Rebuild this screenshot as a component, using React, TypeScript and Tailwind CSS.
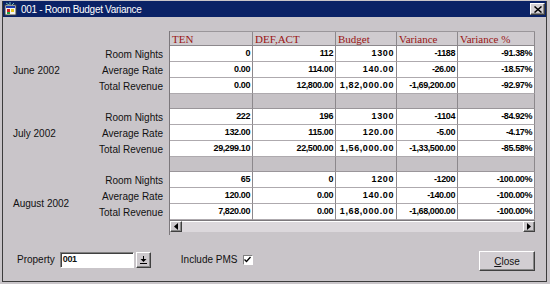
import React from 'react'

type Row = { label: string; values: string[] }
type Group = { month: string; rows: Row[]; shift?: string }

const groups: Group[] = [
  {
    month: 'June 2002',
    rows: [
      { label: 'Room Nights', values: ['0', '112', '1300', '-1188', '-91.38%'] },
      { label: 'Average Rate', values: ['0.00', '114.00', '140.00', '-26.00', '-18.57%'] },
      { label: 'Total Revenue', values: ['0.00', '12,800.00', '1,82,000.00', '-1,69,200.00', '-92.97%'] },
    ],
  },
  {
    month: 'July 2002',
    rows: [
      { label: 'Room Nights', values: ['222', '196', '1300', '-1104', '-84.92%'] },
      { label: 'Average Rate', values: ['132.00', '115.00', '120.00', '-5.00', '-4.17%'] },
      { label: 'Total Revenue', values: ['29,299.10', '22,500.00', '1,56,000.00', '-1,33,500.00', '-85.58%'] },
    ],
  },
  {
    month: 'August 2002',
    shift: 'pt-[14px]',
    rows: [
      { label: 'Room Nights', values: ['65', '0', '1200', '-1200', '-100.00%'] },
      { label: 'Average Rate', values: ['120.00', '0.00', '140.00', '-140.00', '-100.00%'] },
      { label: 'Total Revenue', values: ['7,820.00', '0.00', '1,68,000.00', '-1,68,000.00', '-100.00%'] },
    ],
  },
]

const columns = [
  { title: 'TEN', width: 'w-[83px]', track: 'tracking-[-0.4px]' },
  { title: 'DEF,ACT', width: 'w-[83px]', track: 'tracking-[-0.4px]' },
  { title: 'Budget', width: 'w-[61px]', track: 'tracking-[0.6px]' },
  { title: 'Variance', width: 'w-[61px]', track: 'tracking-[-0.4px]' },
  { title: 'Variance %', width: 'w-[77px]', track: 'tracking-[-0.4px]' },
]

function TitleIcon() {
  return (
    <svg width="14" height="14" viewBox="0 0 14 14">
      <rect x="1" y="3" width="11" height="10" fill="#f4f4f4" stroke="#404040" strokeWidth="1" />
      <rect x="2" y="4" width="9" height="2" fill="#1a3cb0" />
      <rect x="3" y="7" width="3" height="3" fill="#d02020" />
      <rect x="7" y="7" width="3" height="3" fill="#e8c820" />
      <rect x="3" y="10" width="3" height="2" fill="#20a040" />
      <path d="M2 1 L5 3 M6 0 L6 3 M10 1 L8 3" stroke="#70c0c0" strokeWidth="1" />
    </svg>
  )
}

function Raised({ className, children }: { className: string; children?: React.ReactNode }) {
  return (
    <div
      className={`flex items-center justify-center border border-t-white border-l-white border-r-[#404040] border-b-[#404040] bg-[#cdc9cd] shadow-[inset_-1px_-1px_0_#888] ${className}`}
    >
      {children}
    </div>
  )
}

function Arrow({ dir }: { dir: 'left' | 'right' }) {
  return (
    <svg width="4" height="7" viewBox="0 0 4 7">
      {dir === 'left' ? <path d="M4 0 L0 3.5 L4 7 Z" fill="#000" /> : <path d="M0 0 L4 3.5 L0 7 Z" fill="#000" />}
    </svg>
  )
}

export default function App() {
  return (
    <div className="h-[284px] w-[550px] overflow-hidden bg-[#c9c5c9] pb-[2px] pl-[2px] pr-[3px] pt-[1px] font-['Liberation_Sans',Arial,sans-serif] text-[10px] text-[#111]">
      <div className="flex h-full flex-col border-x border-b border-[#3c3c3c]">
        {/* title bar */}
        <div className="flex h-[16px] shrink-0 items-center bg-[#0a2266] pl-[1px] pr-[1px]">
          <TitleIcon />
          <span className="ml-[3px] text-[10px] tracking-[-0.3px] text-white">001 - Room Budget Variance</span>
          <Raised className="ml-auto h-[12px] w-[15px] bg-[#d4d0d4]">
            <svg width="8" height="7" viewBox="0 0 8 7">
              <path d="M0.5 0.5 L7.5 6.5 M7.5 0.5 L0.5 6.5" stroke="#000" strokeWidth="1.5" />
            </svg>
          </Raised>
        </div>

        {/* grid area */}
        <div className="mt-[14px] flex">
          {/* row labels */}
          <div className="flex w-[166px] flex-col">
            <div className="h-[15px]" />
            {groups.map((g) => (
              <div key={g.month} className="flex flex-col">
                <div className="flex h-[48px]">
                  <div className={`flex w-[95px] items-center pl-[10px] ${g.shift ?? ''}`}>{g.month}</div>
                  <div className="flex flex-1 flex-col items-end pr-[6px]">
                    {g.rows.map((r) => (
                      <div key={r.label} className="flex h-[16px] items-center">
                        {r.label}
                      </div>
                    ))}
                  </div>
                </div>
                <div className="h-[15px]" />
              </div>
            ))}
          </div>

          {/* table */}
          <div className="flex w-[366px] flex-col border-l border-[#7c787c]">
            <div className="flex h-[15px] border-t border-[#9a969a]">
              {columns.map((c) => (
                <div
                  key={c.title}
                  className={`${c.width} border-b border-r border-[#8c888c] bg-[#cfcbcf] pl-[2px] font-['Liberation_Serif','Times_New_Roman',serif] text-[11px] leading-[14px] text-[#9a1414]`}
                >
                  {c.title}
                </div>
              ))}
            </div>
            {groups.map((g, gi) => (
              <div key={g.month} className="flex flex-col">
                {g.rows.map((r) => (
                  <div key={r.label} className="flex h-[16px]">
                    {r.values.map((v, i) => (
                      <div
                        key={i}
                        className={`${columns[i].width} ${columns[i].track} flex items-center justify-end border-b border-r border-b-[#aeaaae] border-r-[#8c888c] bg-white pr-[2px] text-[9px] font-bold text-black`}
                      >
                        {v}
                      </div>
                    ))}
                  </div>
                ))}
                {gi < groups.length - 1 && (
                  <div className="flex h-[15px]">
                    {columns.map((c) => (
                      <div key={c.title} className={`${c.width} border-b border-r border-b-[#9a969a] border-r-[#8c888c] bg-[#c6c2c6]`} />
                    ))}
                  </div>
                )}
              </div>
            ))}
            {/* horizontal scrollbar */}
            <div className="flex h-[12px] border-t border-[#7c787c] bg-[#dcd8dc]">
              <Raised className="h-full w-[12px]">
                <Arrow dir="left" />
              </Raised>
              <div className="flex-1 border-t border-white" />
              <Raised className="h-full w-[12px]">
                <Arrow dir="right" />
              </Raised>
            </div>
          </div>
        </div>

        {/* bottom controls */}
        <div className="mt-[13px] flex items-center pl-[14px] pr-[11px]">
          <span>Property</span>
          <div className="ml-[5px] flex h-[16px] w-[74px] items-center border border-b-white border-l-[#808080] border-r-white border-t-[#808080] bg-white pl-[2px] shadow-[inset_1px_1px_0_#404040] text-[9px] font-bold tracking-[-0.4px]">
            001
          </div>
          <Raised className="ml-[2px] h-[16px] w-[15px]">
            <svg width="7" height="8" viewBox="0 0 7 8">
              <path d="M3.5 0 V4" stroke="#000" strokeWidth="1" />
              <path d="M0.5 3 L3.5 6 L6.5 3 Z" fill="#000" />
              <path d="M0 7.5 H7" stroke="#000" strokeWidth="1" />
            </svg>
          </Raised>
          <span className="ml-[30px]">Include PMS</span>
          <div className="ml-[5px] flex h-[10px] w-[10px] items-center justify-center border border-b-white border-l-[#808080] border-r-white border-t-[#808080] bg-white">
            <svg width="7" height="7" viewBox="0 0 7 7">
              <path d="M0.5 3.5 L2.5 5.5 L6.5 1" stroke="#000" strokeWidth="1.3" fill="none" />
            </svg>
          </div>
          <Raised className="ml-auto mt-[3px] h-[20px] w-[56px] bg-[#d2ced2]">
            <span>
              <span className="underline">C</span>lose
            </span>
          </Raised>
        </div>
      </div>
    </div>
  )
}
